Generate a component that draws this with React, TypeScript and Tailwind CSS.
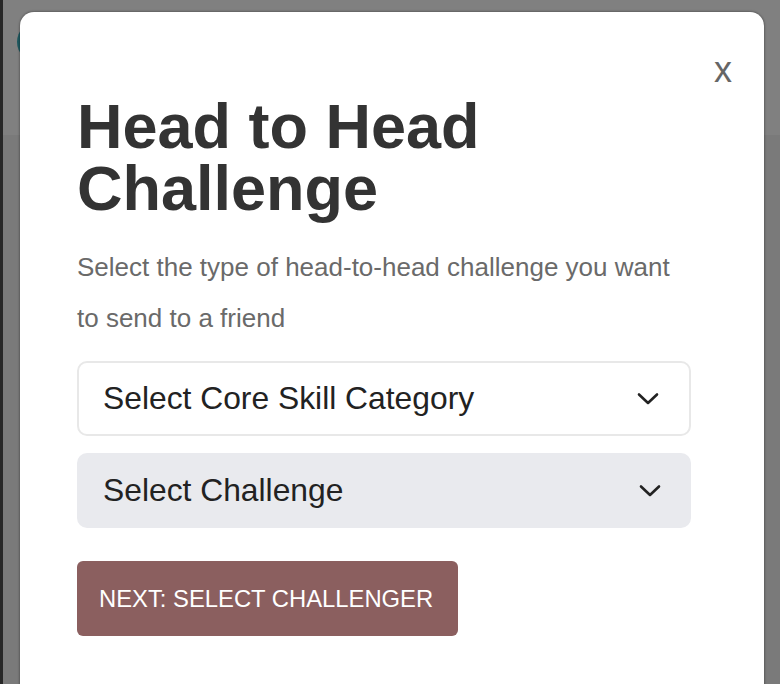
const Chevron = () => (
  <svg width="22" height="14" viewBox="0 0 22 14" fill="none" className="text-[#222]">
    <polyline points="2,2.5 11,11 20,2.5" stroke="currentColor" strokeWidth="2.6" strokeLinecap="round" strokeLinejoin="round" />
  </svg>
);

const SelectBox = ({ label, filled }: { label: string; filled?: boolean }) => {
  return (
    <div
      className={
        "flex items-center justify-between w-[614px] h-[75px] rounded-[10px] pr-[30px] " +
        (filled ? "bg-[#e9eaee] pl-[26px]" : "bg-white border-2 border-[#e8e8e8] pl-[24px] pr-[28px]")
      }
    >
      <span className="text-[31.8px] text-[#222] leading-none">{label}</span>
      <Chevron />
    </div>
  );
};

export default function App() {
  return (
    <div
      className="relative w-[780px] h-[684px] overflow-hidden flex"
      style={{ fontFamily: '"Liberation Sans", Arial, Helvetica, sans-serif' }}
    >
      <div className="w-[3px] bg-[#272727]" />
      <div className="flex-1 flex flex-col">
        <div className="h-[135px] bg-[#808080] relative">
          <div className="absolute left-[14px] top-[22px] w-[40px] h-[40px] rounded-full bg-[#1e5a61]" />
        </div>
        <div className="flex-1 bg-[#7a7a7a]" />
      </div>

      {/* modal */}
      <div className="absolute left-[20px] top-[12px] w-[744px] h-[700px] bg-white rounded-[14px] shadow-[0_0_2px_1px_rgba(0,0,0,0.25)] pl-[57px]">
        <div className="flex justify-end pr-[32px] pt-[40px]">
          <button className="text-[36px] leading-none text-[#666]">x</button>
        </div>
        <h1 className="mt-[7px] text-[63px] leading-[62px] font-bold text-[#333] w-[560px]">
          Head to Head Challenge
        </h1>
        <p className="mt-[23px] text-[26px] leading-[51px] text-[#6a6a6a] w-[620px]">
          Select the type of head-to-head challenge you want to send to a friend
        </p>
        <div className="mt-[17px] flex flex-col gap-[17px]">
          <SelectBox label="Select Core Skill Category" />
          <SelectBox label="Select Challenge" filled />
        </div>
        <button className="mt-[33px] w-[381px] h-[75px] rounded-[6px] bg-[#8b5f5f] text-white text-[23.8px] text-left pl-[22px]">
          NEXT: SELECT CHALLENGER
        </button>
      </div>
    </div>
  );
}
